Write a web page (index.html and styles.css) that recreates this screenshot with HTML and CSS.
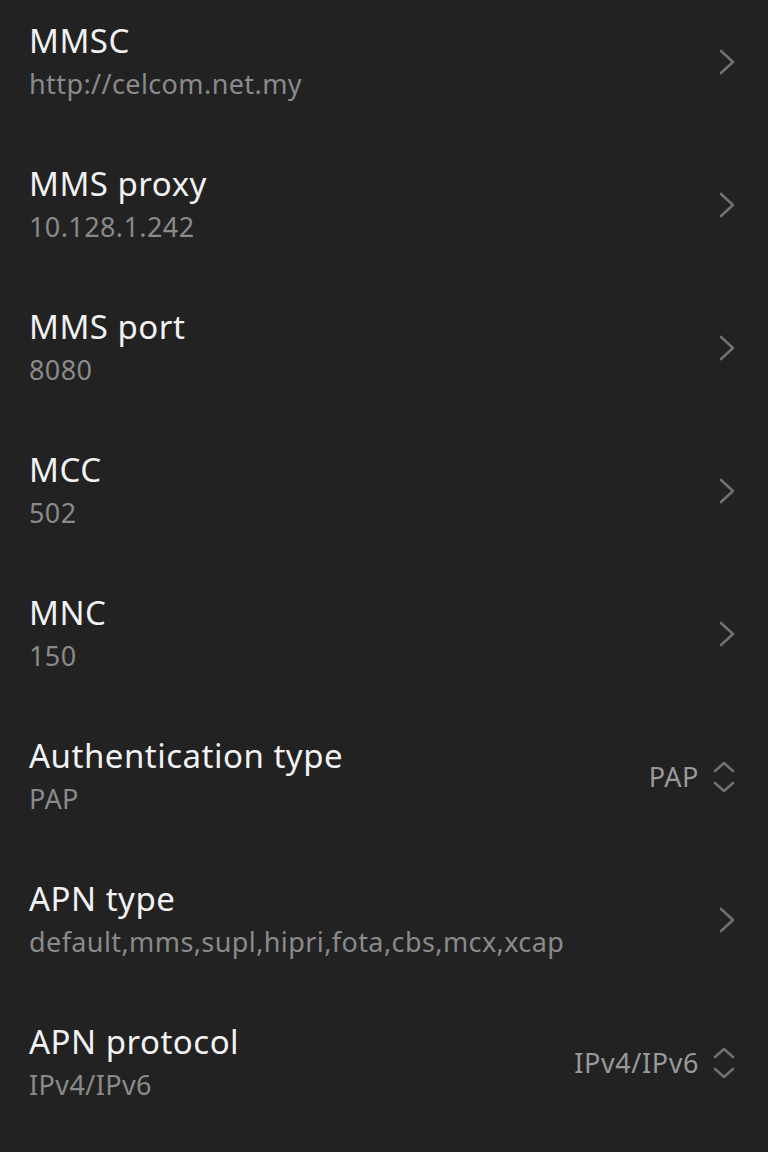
FILE: index.html
```html
<!DOCTYPE html>
<html>
<meta charset="UTF-8">
<meta name="viewport" content="width=device-width, initial-scale=1.0">

<head>
    <title>APN</title>
    <link rel="stylesheet" href="styles.css">
</head>

<body>
    <div class="list">
        <div class="item">
            <div class="item-text">
                <div class="item-title">MMSC</div>
                <div class="item-sub">http://celcom.net.my</div>
            </div>
            <svg class="chevron" viewBox="0 0 16 26"><path d="M2 2 L14 13 L2 24" /></svg>
        </div>

        <div class="item">
            <div class="item-text">
                <div class="item-title">MMS proxy</div>
                <div class="item-sub">10.128.1.242</div>
            </div>
            <svg class="chevron" viewBox="0 0 16 26"><path d="M2 2 L14 13 L2 24" /></svg>
        </div>

        <div class="item">
            <div class="item-text">
                <div class="item-title">MMS port</div>
                <div class="item-sub">8080</div>
            </div>
            <svg class="chevron" viewBox="0 0 16 26"><path d="M2 2 L14 13 L2 24" /></svg>
        </div>

        <div class="item">
            <div class="item-text">
                <div class="item-title">MCC</div>
                <div class="item-sub">502</div>
            </div>
            <svg class="chevron" viewBox="0 0 16 26"><path d="M2 2 L14 13 L2 24" /></svg>
        </div>

        <div class="item">
            <div class="item-text">
                <div class="item-title">MNC</div>
                <div class="item-sub">150</div>
            </div>
            <svg class="chevron" viewBox="0 0 16 26"><path d="M2 2 L14 13 L2 24" /></svg>
        </div>

        <div class="item">
            <div class="item-text">
                <div class="item-title">Authentication type</div>
                <div class="item-sub">PAP</div>
            </div>
            <div class="item-value">PAP</div>
            <svg class="updown" viewBox="0 0 22 34"><path d="M2 11 L11 3 L20 11 M2 23 L11 31 L20 23" /></svg>
        </div>

        <div class="item">
            <div class="item-text">
                <div class="item-title">APN type</div>
                <div class="item-sub">default,mms,supl,hipri,fota,cbs,mcx,xcap</div>
            </div>
            <svg class="chevron" viewBox="0 0 16 26"><path d="M2 2 L14 13 L2 24" /></svg>
        </div>

        <div class="item">
            <div class="item-text">
                <div class="item-title">APN protocol</div>
                <div class="item-sub">IPv4/IPv6</div>
            </div>
            <div class="item-value">IPv4/IPv6</div>
            <svg class="updown" viewBox="0 0 22 34"><path d="M2 11 L11 3 L20 11 M2 23 L11 31 L20 23" /></svg>
        </div>
    </div>
</body>

</html>
```

FILE: styles.css
```css
body {
    margin: 0;
    background-color: #222222;
    font-family: "Noto Sans", sans-serif;
}

.list {
    margin-top: -10px;
}

.item {
    height: 143px;
    display: flex;
    align-items: center;
    padding: 0 33px 0 29px;
}

.item-text {
    flex: 1;
    display: flex;
    flex-direction: column;
    gap: 5px;
}

.item-title {
    font-size: 33px;
    line-height: 40px;
    letter-spacing: 0.5px;
    color: #f2f2f2;
}

.item-sub {
    font-size: 27px;
    line-height: 36px;
    letter-spacing: 0.4px;
    color: #8a8a8a;
}

.item-value {
    font-size: 27px;
    letter-spacing: 0.6px;
    color: #999999;
    margin-right: 14px;
}

.chevron {
    width: 16px;
    height: 26px;
    fill: none;
    stroke: #707070;
    stroke-width: 2.6;
    stroke-linecap: round;
    stroke-linejoin: round;
}

.updown {
    width: 22px;
    height: 34px;
    fill: none;
    stroke: #707070;
    stroke-width: 2.6;
    stroke-linecap: round;
    stroke-linejoin: round;
}
```
